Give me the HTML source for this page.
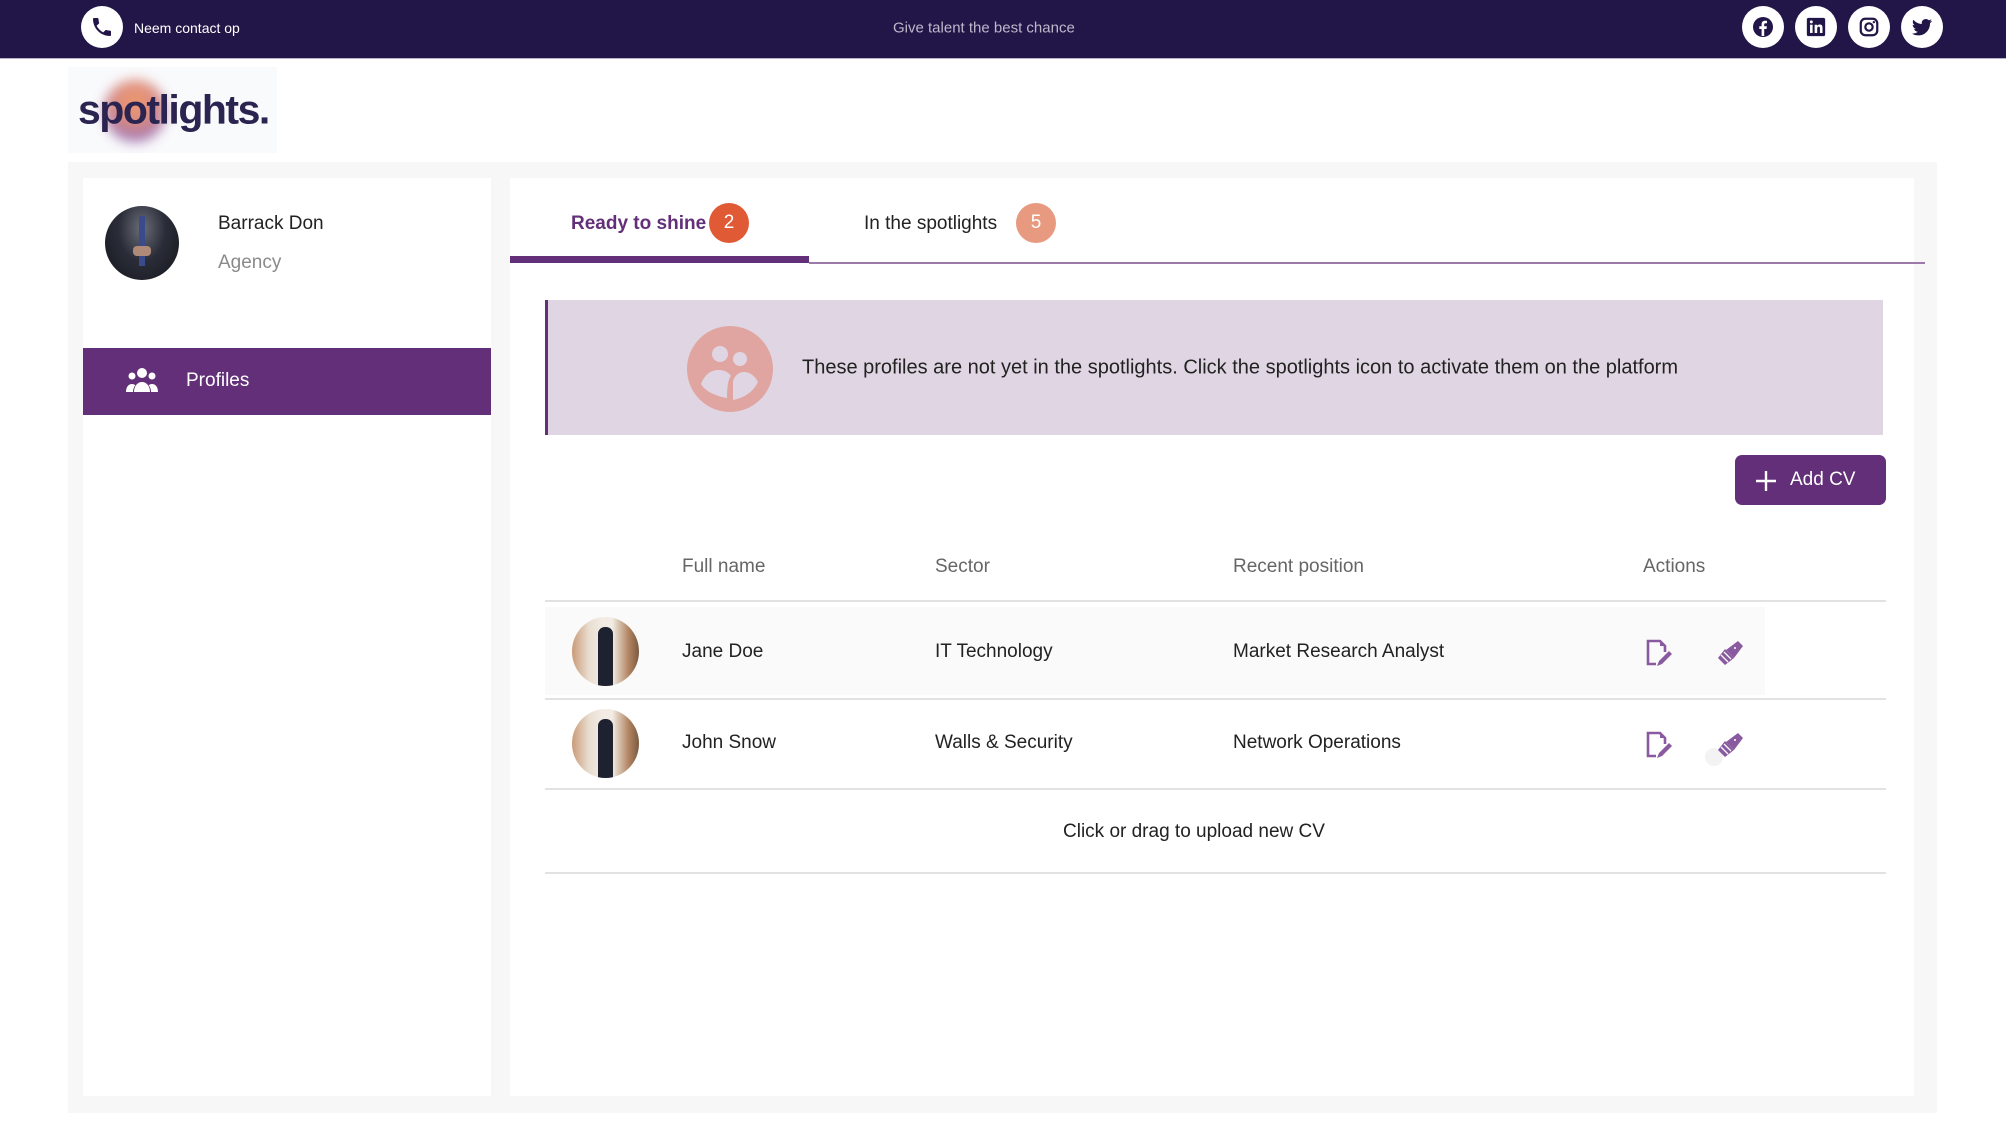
<!DOCTYPE html>
<html><head><meta charset="utf-8"><style>
*{margin:0;padding:0;box-sizing:border-box}
body{width:2006px;height:1128px;background:#fff;font-family:"Liberation Sans",sans-serif;position:relative;overflow:hidden;color:#222}
.a{position:absolute}
.top{left:0;top:0;width:2006px;height:59px;background:#221547;border-bottom:1px solid #b9b3c9}
.circ{border-radius:50%;background:#fff;width:42px;height:42px;display:flex;align-items:center;justify-content:center}
.t{white-space:nowrap;transform:translateY(-50%)}
.hl{height:2px;background:#e2e2e2;left:545px;width:1341px}
</style></head><body>
<div class="a top"></div>
<div class="a circ" style="left:81px;top:6px"><svg width="24" height="24" viewBox="0 0 24 24"><path d="M6.6 10.8c1.4 2.8 3.8 5.1 6.6 6.6l2.2-2.2c.3-.3.7-.4 1-.2 1.1.4 2.300.6 3.6.6.6 0 1 .4 1 1V20c0 .6-.4 1-1 1C10.6 21 3 13.4 3 4c0-.6.4-1 1-1h3.5c.6 0 1 .4 1 1 0 1.3.2 2.5.6 3.6.1.3 0 .7-.2 1z" fill="#221547"/></svg></div>
<div class="a t" style="left:134px;top:28px;color:#fff;font-size:14px">Neem contact op</div>
<div class="a t" style="left:893px;top:28px;color:#bdb8cc;font-size:15px">Give talent the best chance</div>
<div class="a circ" style="left:1742px;top:6px"><svg width="24" height="24" viewBox="0 0 24 24"><circle cx="12" cy="12" r="10" fill="#221547"/><path d="M13.2 21v-7h2.3l.4-2.7h-2.7V9.6c0-.8.3-1.3 1.4-1.3H16V5.9c-.3 0-1.1-.1-2-.1-2 0-3.4 1.2-3.4 3.5v2h-2.3V14h2.3v7z" fill="#fff"/></svg></div>
<div class="a circ" style="left:1795px;top:6px"><svg width="22" height="22" viewBox="0 0 24 24"><rect x="2" y="2" width="20" height="20" rx="2" fill="#221547"/><rect x="5.5" y="9.5" width="2.8" height="9" fill="#fff"/><circle cx="6.9" cy="6.4" r="1.6" fill="#fff"/><path d="M10.5 9.5h2.7v1.3c.5-.9 1.6-1.5 2.9-1.5 2.3 0 3 1.4 3 3.600v5.6h-2.8v-5c0-1.2-.3-1.9-1.4-1.9s-1.6.8-1.6 1.9v5h-2.8z" fill="#fff"/></svg></div>
<div class="a circ" style="left:1848px;top:6px"><svg width="22" height="22" viewBox="0 0 24 24"><rect x="3" y="3" width="18" height="18" rx="5" fill="none" stroke="#221547" stroke-width="2.4"/><circle cx="12" cy="12" r="4" fill="none" stroke="#221547" stroke-width="2.4"/><circle cx="17.3" cy="6.7" r="1.3" fill="#221547"/></svg></div>
<div class="a circ" style="left:1901px;top:6px"><svg width="24" height="24" viewBox="0 0 24 24"><path d="M22 5.9c-.7.3-1.5.6-2.4.7.9-.5 1.5-1.3 1.8-2.3-.8.5-1.7.8-2.6 1-.8-.8-1.8-1.3-3-1.3-2.3 0-4.1 1.8-4.1 4.1 0 .3 0 .6.1.9C8.4 8.8 5.4 7.2 3.4 4.7c-.4.6-.6 1.3-.6 2.1 0 1.4.7 2.7 1.8 3.400-.7 0-1.3-.2-1.900-.5 0 2 1.4 3.7 3.3 4.1-.6.2-1.2.2-1.9.1.5 1.6 2 2.8 3.8 2.9-1.4 1.1-3.2 1.8-5.1 1.8H2c1.8 1.2 4 1.8 6.3 1.8 7.5 0 11.7-6.3 11.7-11.7v-.5c.8-.6 1.5-1.3 2-2.2z" fill="#221547"/></svg></div>

<div class="a" style="left:68px;top:67px;width:209px;height:86px;background:#f9fafc"></div>
<div class="a" style="left:104px;top:80px;width:62px;height:62px;border-radius:50%;background:radial-gradient(circle at 50% 35%,#ef8a55 0%,#d87a6a 40%,#8c5ba8 75%,rgba(140,91,168,0) 100%);filter:blur(6px);opacity:.85"></div>
<div class="a t" style="left:78px;top:110px;font-size:41px;font-weight:bold;color:#2c2450;letter-spacing:-1.5px">spotlights.</div>

<div class="a" style="left:68px;top:162px;width:1869px;height:951px;background:#f7f7f7"></div>
<div class="a" style="left:83px;top:178px;width:408px;height:918px;background:#fff"></div>
<div class="a" style="left:105px;top:206px;width:74px;height:74px;border-radius:50%;background:radial-gradient(ellipse at 50% 30%,#6a6e78 0%,#2a2d38 45%,#15161c 100%);overflow:hidden"><div style="position:absolute;left:34px;top:10px;width:6px;height:50px;background:#3a4a8a"></div><div style="position:absolute;left:28px;top:40px;width:18px;height:10px;background:#b08a78;border-radius:4px"></div></div>
<div class="a t" style="left:218px;top:224px;font-size:19px;color:#222">Barrack Don</div>
<div class="a t" style="left:218px;top:263px;font-size:19px;color:#8a8a8a">Agency</div>
<div class="a" style="left:83px;top:348px;width:408px;height:67px;background:#622f78"></div>
<svg class="a" style="left:125px;top:367px" width="34" height="28" viewBox="0 0 34 28"><circle cx="17" cy="6" r="5" fill="#fff"/><circle cx="7" cy="9" r="3.5" fill="#fff"/><circle cx="27" cy="9" r="3.5" fill="#fff"/><path d="M9 25c0-6 3.5-10 8-10s8 4 8 10z" fill="#fff"/><path d="M1 25c0-5 2.5-8 6-8 1.5 0 2.5.5 3.3 1.3C8.8 20 8 22.5 8 25z" fill="#fff"/><path d="M33 25c0-5-2.5-8-6-8-1.5 0-2.5.5-3.3 1.3 1.5 1.7 2.3 4.2 2.3 6.7z" fill="#fff"/></svg>
<div class="a t" style="left:186px;top:381px;font-size:19px;color:#fff">Profiles</div>

<div class="a" style="left:510px;top:178px;width:1404px;height:918px;background:#fff"></div>
<div class="a t" style="left:571px;top:224px;font-size:19px;color:#622f78;font-weight:bold">Ready to shine</div>
<div class="a" style="left:709px;top:203px;width:40px;height:40px;border-radius:50%;background:#e05a35;color:#fff;font-size:19px;display:flex;align-items:center;justify-content:center">2</div>
<div class="a t" style="left:864px;top:224px;font-size:19px;color:#222">In the spotlights</div>
<div class="a" style="left:1016px;top:203px;width:40px;height:40px;border-radius:50%;background:#e89a80;color:#fff;font-size:19px;display:flex;align-items:center;justify-content:center">5</div>
<div class="a" style="left:809px;top:262px;width:1116px;height:2px;background:#9b7aaa"></div>
<div class="a" style="left:510px;top:256px;width:299px;height:7px;background:#622f78"></div>

<div class="a" style="left:545px;top:300px;width:1338px;height:135px;background:#e0d5e3;border-left:3px solid #622f78"></div>
<svg class="a" style="left:687px;top:326px" width="86" height="86" viewBox="0 0 86 86"><circle cx="43" cy="43" r="43" fill="#e0a5a0"/><circle cx="33" cy="28" r="8" fill="#e0d5e3"/><circle cx="53" cy="33" r="7" fill="#e0d5e3"/><path d="M14 58c4-10 10-14 18-14 6 0 10 3 12 6-2 2-4 8-4 22-12-2-22-7-26-14z" fill="#e0d5e3"/><path d="M46 74V55c2-6 6-9 11-9 6 0 11 4 14 10-5 10-14 16-25 18z" fill="#e0d5e3"/></svg>
<div class="a t" style="left:802px;top:368px;font-size:20px;color:#222">These profiles are not yet in the spotlights. Click the spotlights icon to activate them on the platform</div>

<div class="a" style="left:1735px;top:455px;width:151px;height:50px;border-radius:7px;background:#622f78"></div>
<svg class="a" style="left:1755px;top:470px" width="22" height="22" viewBox="0 0 22 22"><path d="M11 1v20M1 11h20" stroke="#fff" stroke-width="2.4"/></svg>
<div class="a t" style="left:1790px;top:480px;font-size:19px;color:#fff">Add CV</div>

<div class="a t" style="left:682px;top:567px;font-size:19px;color:#666">Full name</div>
<div class="a t" style="left:935px;top:567px;font-size:19px;color:#666">Sector</div>
<div class="a t" style="left:1233px;top:567px;font-size:19px;color:#666">Recent position</div>
<div class="a t" style="left:1643px;top:567px;font-size:19px;color:#666">Actions</div>
<div class="a hl" style="top:600px"></div>
<div class="a" style="left:545px;top:607px;width:1220px;height:88px;background:#fafafa"></div>
<div class="a hl" style="top:698px"></div>
<div class="a hl" style="top:788px"></div>
<div class="a hl" style="top:872px"></div>

<div class="a" style="left:572px;top:617px;width:67px;height:69px;border-radius:50%;background:linear-gradient(90deg,#c99a78 0%,#e9ddd0 25%,#f2ece4 45%,#f2ece4 60%,#b08360 85%,#7a5a40 100%);overflow:hidden"><div style="position:absolute;left:26px;top:10px;width:15px;height:60px;background:#1e2230;border-radius:7px 7px 0 0"></div></div>
<div class="a" style="left:572px;top:709px;width:67px;height:69px;border-radius:50%;background:linear-gradient(90deg,#c99a78 0%,#e9ddd0 25%,#f2ece4 45%,#f2ece4 60%,#b08360 85%,#7a5a40 100%);overflow:hidden"><div style="position:absolute;left:26px;top:10px;width:15px;height:60px;background:#1e2230;border-radius:7px 7px 0 0"></div></div>

<div class="a t" style="left:682px;top:652px;font-size:19px">Jane Doe</div>
<div class="a t" style="left:935px;top:652px;font-size:19px">IT Technology</div>
<div class="a t" style="left:1233px;top:652px;font-size:19px">Market Research Analyst</div>
<div class="a t" style="left:682px;top:743px;font-size:19px">John Snow</div>
<div class="a t" style="left:935px;top:743px;font-size:19px">Walls &amp; Security</div>
<div class="a t" style="left:1233px;top:743px;font-size:19px">Network Operations</div>

<svg class="a" style="left:1645px;top:639px" width="28" height="29" viewBox="0 0 28 29"><path d="M11 25H3V2h12l5 5v6" fill="none" stroke="#8a5aa0" stroke-width="2.6"/><path d="M15 2v5h5" fill="#8a5aa0"/><path d="M12 27l2-5 10-10 3 3-10 10z" fill="#8a5aa0"/></svg>
<svg class="a" style="left:1716px;top:640px" width="28" height="27" viewBox="0 0 28 27"><path d="M2 18l7-9 9 9-9 7z" fill="#8a5aa0"/><path d="M10 10l12-9 5 5-9 12z" fill="#8a5aa0"/><path d="M5 15l7 7M8 12l7 7" stroke="#fff" stroke-width="1.3"/><circle cx="19" cy="8" r="1" fill="#fff"/></svg>
<svg class="a" style="left:1645px;top:731px" width="28" height="29" viewBox="0 0 28 29"><path d="M11 25H3V2h12l5 5v6" fill="none" stroke="#8a5aa0" stroke-width="2.6"/><path d="M15 2v5h5" fill="#8a5aa0"/><path d="M12 27l2-5 10-10 3 3-10 10z" fill="#8a5aa0"/></svg>
<div class="a" style="left:1705px;top:748px;width:18px;height:18px;border-radius:50%;background:#f3f3f3"></div>
<svg class="a" style="left:1716px;top:732px" width="28" height="27" viewBox="0 0 28 27"><path d="M2 18l7-9 9 9-9 7z" fill="#8a5aa0"/><path d="M10 10l12-9 5 5-9 12z" fill="#8a5aa0"/><path d="M5 15l7 7M8 12l7 7" stroke="#fff" stroke-width="1.3"/><circle cx="19" cy="8" r="1" fill="#fff"/></svg>

<div class="a t" style="left:1063px;top:832px;font-size:19px">Click or drag to upload new CV</div>
</body></html>
